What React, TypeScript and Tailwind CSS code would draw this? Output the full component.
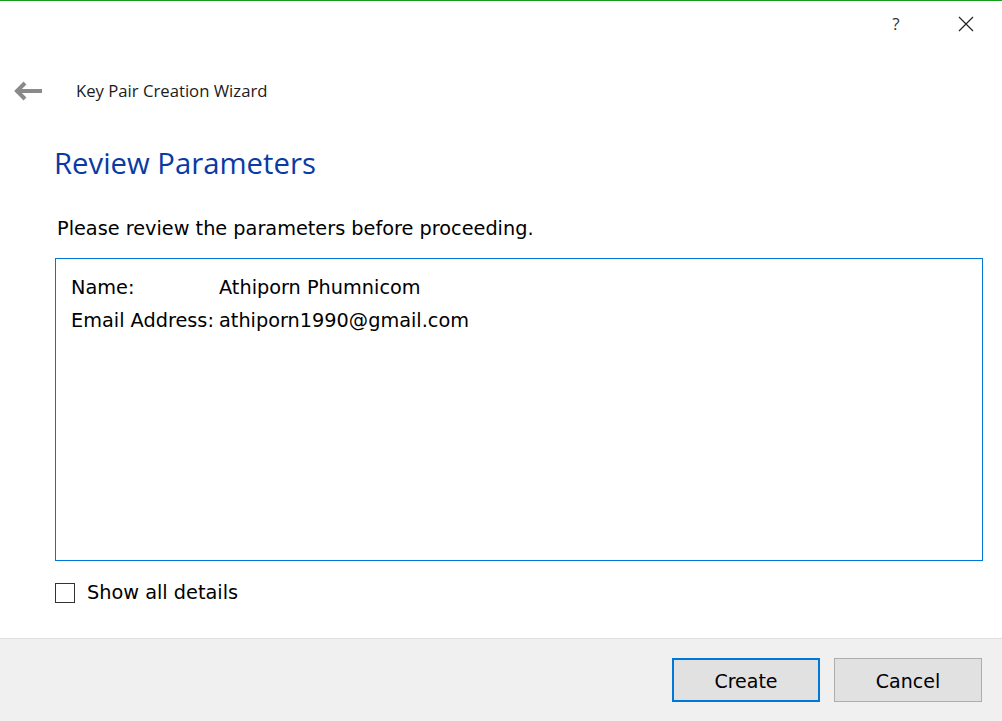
import React from "react";

function BackArrow() {
  return (
    <svg width="30" height="20" viewBox="0 0 30 20" fill="none">
      <path d="M28 10H3" stroke="#8a8a8a" strokeWidth="4" />
      <path d="M11 2L3 10l8 8" stroke="#8a8a8a" strokeWidth="4" />
    </svg>
  );
}

const body = { fontFamily: '"DejaVu Sans", sans-serif' };

export default function App() {
  return (
    <div className="w-[1002px] h-[721px] bg-white flex flex-col overflow-hidden" style={{ fontFamily: '"Open Sans", sans-serif' }}>
      <div className="h-[1px] bg-[#16a01a]" />
      {/* title bar */}
      <div className="h-[46px] flex justify-end items-center text-[#333]">
        <div className="w-[70px] text-center text-[17px]">?</div>
        <div className="w-[70px] flex justify-center mr-[1px]">
          <svg width="16" height="16" viewBox="0 0 16 16">
            <path d="M1 1L15 15M15 1L1 15" stroke="#222" strokeWidth="1.2" />
          </svg>
        </div>
      </div>
      {/* header */}
      <div className="flex items-center h-[44px] pl-[14px] mt-[22px]">
        <BackArrow />
        <span className="ml-[32px] text-[16.7px] text-[#1b1b1b]">Key Pair Creation Wizard</span>
      </div>
      <div className="flex-1 flex flex-col px-[55px]">
        <h1 className="mt-[30px] text-[29.3px] leading-[40px] text-[#0a3aa4] -ml-[1px]">Review Parameters</h1>
        <div style={body} className="flex flex-col">
          <p className="mt-[33px] text-[19.3px] leading-[26px] text-black ml-[2px]">Please review the parameters before proceeding.</p>
          <div className="mt-[16px] h-[303px] w-[928px] border border-[#0078d7] px-[15px] pt-[12px] text-[19.3px] text-black leading-[33px]">
            <div className="grid grid-cols-[148px_1fr]">
              <span>Name:</span>
              <span>Athiporn Phumnicom</span>
              <span>Email Address:</span>
              <span>athiporn1990@gmail.com</span>
            </div>
          </div>
          <label className="mt-[21px] flex items-center">
            <span className="w-[20px] h-[20px] border border-[#333] bg-white" />
            <span className="ml-[12px] text-[19.3px] leading-[22px] text-black">Show all details</span>
          </label>
        </div>
      </div>
      {/* footer */}
      <div style={body} className="h-[83px] bg-[#f0f0f0] border-t border-[#dfdfdf] flex justify-end items-start pt-[19px] pr-[20px] gap-[14px]">
        <button className="w-[148px] h-[44px] pt-[3px] bg-[#e1e1e1] border-2 border-[#0078d7] text-[19px] text-black">Create</button>
        <button className="w-[148px] h-[44px] pt-[3px] bg-[#e1e1e1] border border-[#adadad] text-[19px] text-black">Cancel</button>
      </div>
    </div>
  );
}
